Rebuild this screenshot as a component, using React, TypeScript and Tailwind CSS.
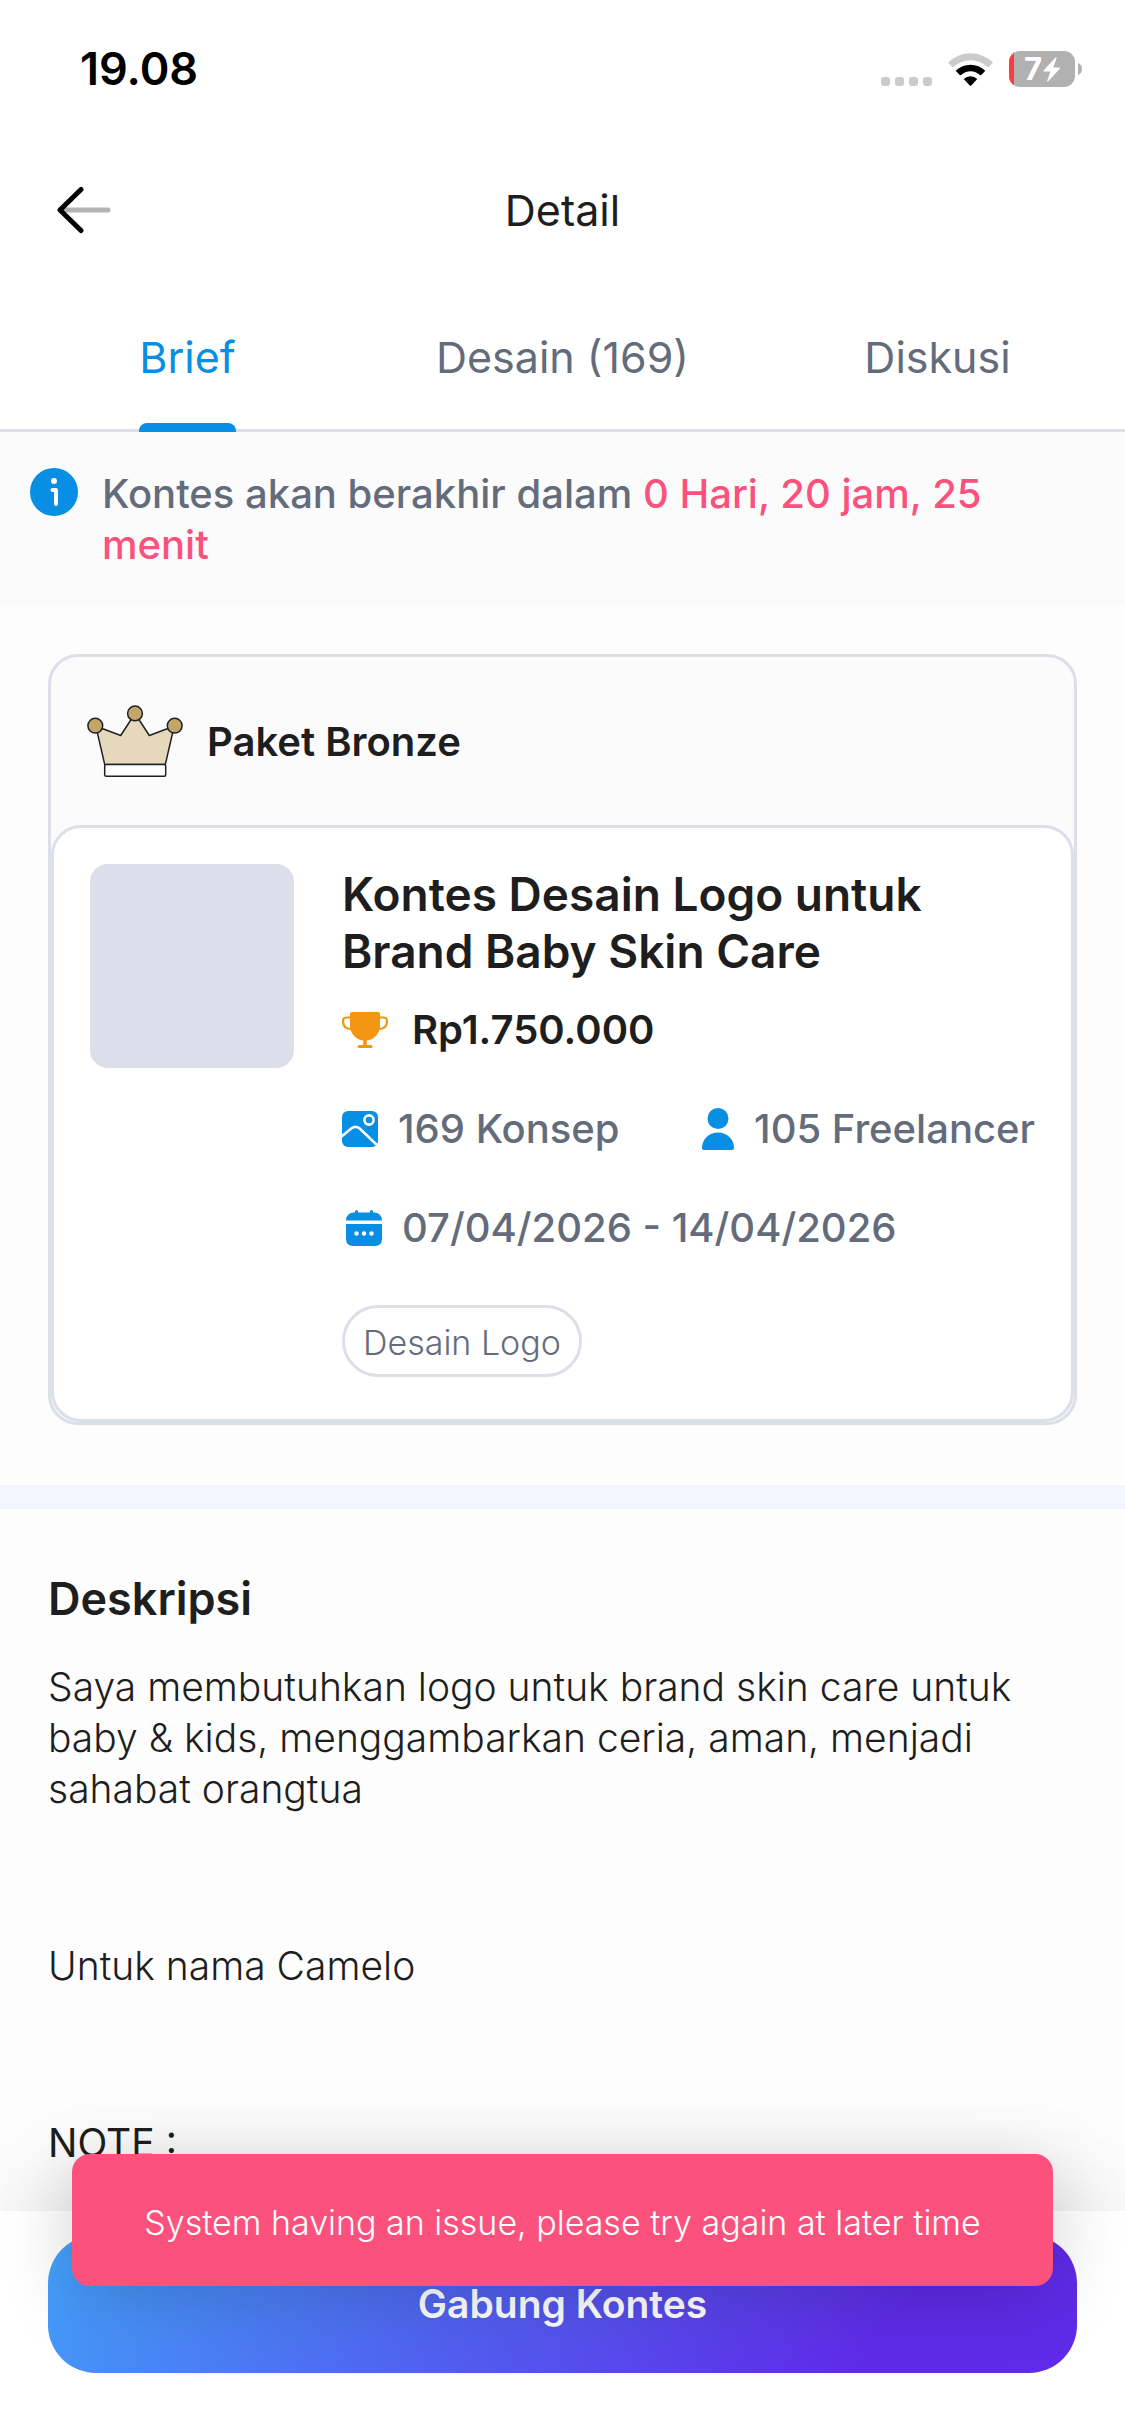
import type { ReactNode } from 'react'

function WifiIcon() {
  return (
    <svg width="45" height="33" viewBox="0 0 45 33" aria-hidden="true">
      <path d="M0 9.5a32 32 0 0 1 45 0l-4.2 4.4a1 1 0 0 1-1.4 0a24.5 24.5 0 0 0-33.8 0a1 1 0 0 1-1.4 0z" fill="#cbcbcb" />
      <path d="M7.7 17.8a21 21 0 0 1 29.6 0l-4 4.2a1 1 0 0 1-1.4 0a13.5 13.5 0 0 0-18.8 0a1 1 0 0 1-1.4 0z" fill="#000" />
      <path d="M15.7 26a10 10 0 0 1 13.6 0l-6.1 6.5a1 1 0 0 1-1.4 0z" fill="#000" />
    </svg>
  )
}

function BatteryIcon() {
  return (
    <svg className="overflow-visible" width="74" height="36" viewBox="0 0 74 36" role="img" aria-label="Baterai 7%">
      <defs>
        <clipPath id="battery-body">
          <rect width="66" height="36" rx="11" />
        </clipPath>
      </defs>
      <g clipPath="url(#battery-body)">
        <rect width="66" height="36" fill="#b1b1b1" />
        <rect width="5" height="36" fill="#ff3b3f" />
      </g>
      <path d="M69 12a6.5 6.5 0 0 1 0 12z" fill="#b1b1b1" />
      <text x="15" y="29" fill="#fff" fontFamily="Inter, sans-serif" fontWeight="700" fontSize="31">7</text>
      <path d="M46.5 6.5L34.5 19.500q-.5 1 .6 1h6.400l-3.400 9.500q0 1 1 .5L51 17.500q.5-1-.6-1H44.300l3.300-9.500q0-1-1.100-.5z" fill="#fff" />
    </svg>
  )
}

function BackIcon() {
  return (
    <svg width="54" height="48" viewBox="0 0 54 48" fill="none" strokeLinecap="round" strokeLinejoin="round" aria-hidden="true">
      <path d="M7 24H51" stroke="#b3b3b3" strokeWidth="5" />
      <path d="M24 3.500L3 24L24 44.500" stroke="#000" strokeWidth="5" />
    </svg>
  )
}

function InfoIcon() {
  return (
    <svg className="shrink-0" width="48" height="48" viewBox="0 0 48 48" aria-hidden="true">
      <circle cx="24" cy="24" r="24" fill="#088ee2" />
      <circle cx="24" cy="13" r="3" fill="#fff" />
      <path d="M22.500 22H26V36" fill="none" stroke="#fff" strokeWidth="4" strokeLinecap="round" strokeLinejoin="round" />
    </svg>
  )
}

function CrownIcon() {
  return (
    <svg width="96" height="72" viewBox="0 0 96 72" stroke="#1d2226" strokeWidth="1.500" strokeLinejoin="round" aria-hidden="true">
      <path d="M9.500 24L17.700 59.500H78.300L86.500 24L79.500 24L62.300 30.500L48 8.500L33.700 30.500L16.500 24Z" fill="#e6d8ba" />
      <rect x="17.700" y="59.500" width="61" height="11.700" rx="1.500" fill="#fff" />
      <circle cx="8.300" cy="20.700" r="7.400" fill="#c3a567" />
      <circle cx="48" cy="8.400" r="7.400" fill="#c3a567" />
      <circle cx="87.700" cy="20.700" r="7.400" fill="#c3a567" />
    </svg>
  )
}

function TrophyIcon() {
  return (
    <svg width="46" height="36" viewBox="0 0 46 36" aria-hidden="true">
      <path d="M8 2q0-2 2-2H36q2 0 2 2V14C38 21 32 28 25 28.500h-4C14 28 8 21 8 14z" fill="#f29613" />
      <path d="M9 5.500H4.500Q1 5.500 1 9C1 14 4 17 9 17M37 5.500H41.500Q45 5.500 45 9C45 14 42 17 37 17" fill="none" stroke="#f29613" strokeWidth="2.200" />
      <path d="M23 27V34" stroke="#f29613" strokeWidth="3.500" />
      <path d="M17 34.500H29" stroke="#f29613" strokeWidth="3" strokeLinecap="round" />
    </svg>
  )
}

function PictureIcon() {
  return (
    <svg width="36" height="36" viewBox="0 0 36 36" aria-hidden="true">
      <defs>
        <clipPath id="picture-frame">
          <rect width="36" height="36" rx="6" />
        </clipPath>
      </defs>
      <g clipPath="url(#picture-frame)">
        <rect width="36" height="36" fill="#088ee2" />
        <path d="M-1 26L9.500 17.300Q13.500 14.500 17.500 17.300L37 36" fill="none" stroke="#fff" strokeWidth="2.600" />
        <circle cx="27" cy="9" r="4.600" fill="#088ee2" stroke="#fff" strokeWidth="2.600" />
      </g>
    </svg>
  )
}

function PersonIcon() {
  return (
    <svg width="32" height="42" viewBox="0 0 32 42" fill="#088ee2" aria-hidden="true">
      <circle cx="16" cy="10.500" r="10.500" />
      <path d="M0 40C0 31 7 24.500 16 24.500S32 31 32 40q0 2-2 2H2q-2 0-2-2z" />
    </svg>
  )
}

function CalendarIcon() {
  return (
    <svg width="36" height="36" viewBox="0 0 36 36" fill="#088ee2" aria-hidden="true">
      <path d="M0 10.500C0 5.500 3.500 2.500 8 2.500H28C32.500 2.500 36 5.500 36 10.500z" />
      <path d="M10.500 1.500V4M25.500 1.500V4" stroke="#088ee2" strokeWidth="3" strokeLinecap="round" />
      <path d="M0 14H36V29Q36 36 29 36H7Q0 36 0 29z" />
      <g fill="#fff">
        <circle cx="10.500" cy="23.500" r="2.200" />
        <circle cx="18" cy="23.500" r="2.200" />
        <circle cx="25.500" cy="23.500" r="2.200" />
      </g>
    </svg>
  )
}

function Stat({ icon, children }: { icon: ReactNode; children: ReactNode }) {
  return (
    <div className="flex items-center gap-5 text-[40px] leading-[51px] font-medium whitespace-nowrap text-[#646c7b]">
      {icon}
      <span>{children}</span>
    </div>
  )
}

const tabs = [
  { label: 'Brief', active: true },
  { label: 'Desain (169)', active: false },
  { label: 'Diskusi', active: false },
]

export default function App() {
  return (
    <div className="flex min-h-screen flex-col bg-[#fdfdfd] font-['Inter',sans-serif] text-[#1e1e1e]">
      <div className="bg-white">
        <div className="flex h-[138px] items-center justify-between pr-[42px] pl-20">
          <span className="text-[45px] font-semibold text-black">19.08</span>
          <div className="flex items-center gap-4">
            <div className="flex h-[33px] items-end gap-[5px]">
              <span className="size-[9px] rounded-[3px] bg-[#cbcbcb]" />
              <span className="size-[9px] rounded-[3px] bg-[#cbcbcb]" />
              <span className="size-[9px] rounded-[3px] bg-[#cbcbcb]" />
              <span className="size-[9px] rounded-[3px] bg-[#cbcbcb]" />
            </div>
            <WifiIcon />
            <BatteryIcon />
          </div>
        </div>
        <header className="grid h-36 grid-cols-[1fr_auto_1fr] items-center px-[57px]">
          <button type="button" aria-label="Kembali" className="w-fit">
            <BackIcon />
          </button>
          <h1 className="text-[43px]">Detail</h1>
        </header>
        <nav className="grid h-[150px] grid-cols-3 border-b-[3px] border-[#dcdfe9]">
          {tabs.map((tab) => (
            <div key={tab.label} className="flex justify-center">
              <button
                type="button"
                aria-current={tab.active ? 'page' : undefined}
                className={
                  tab.active
                    ? 'relative flex items-center pt-1 text-[43px] text-[#088ee2] after:absolute after:inset-x-0 after:-bottom-[3px] after:h-[9px] after:rounded-t-lg after:bg-[#088ee2]'
                    : 'flex items-center pt-1 text-[43px] text-[#646c7b]'
                }
              >
                {tab.label}
              </button>
            </div>
          ))}
        </nav>
      </div>

      <div className="flex gap-6 bg-[#fbfbfc] py-9 pr-12 pl-[30px]">
        <InfoIcon />
        <p className="text-[40px] leading-[51px] font-medium text-[#646c7b]">
          Kontes akan berakhir dalam <span className="text-[#fc517d]">0 Hari, 20 jam, 25 menit</span>
        </p>
      </div>

      <section className="mx-12 mt-12 mb-15 rounded-[30px] border-[3px] border-[#dcdfe9] bg-[#fbfbfc]">
        <div className="flex items-center gap-6 px-9 py-12">
          <CrownIcon />
          <h2 className="text-[40px] leading-[51px] font-semibold">Paket Bronze</h2>
        </div>
        <div className="flex items-start gap-12 rounded-[30px] border-[3px] border-[#dcdfe9] bg-white px-9 pt-9 pb-[42px]">
          <div className="size-51 shrink-0 rounded-[18px] bg-[#dcdfe9]" />
          <div className="flex min-w-0 flex-1 flex-col items-start pt-[2px]">
            <h3 className="text-[46px] leading-[57px] font-semibold">Kontes Desain Logo untuk Brand Baby Skin Care</h3>
            <div className="mt-6 flex items-center gap-6 text-[40px] leading-[51px] font-semibold">
              <TrophyIcon />
              <span>Rp1.750.000</span>
            </div>
            <div className="mt-12 flex w-full justify-between">
              <Stat icon={<PictureIcon />}>169 Konsep</Stat>
              <Stat icon={<PersonIcon />}>105 Freelancer</Stat>
            </div>
            <div className="mt-12 pl-1">
              <Stat icon={<CalendarIcon />}>07/04/2026 - 14/04/2026</Stat>
            </div>
            <span className="mt-[52px] rounded-full border-[3px] border-[#dcdfe9] px-[18px] pt-[11px] pb-[7px] text-[34px] leading-[48px] font-light text-[#646c7b]">
              Desain Logo
            </span>
          </div>
        </div>
      </section>

      <div className="h-6 bg-[#f3f5ff]" />

      <section className="flex flex-1 flex-col px-12 pt-15">
        <h2 className="text-[45px] leading-[60px] font-semibold">Deskripsi</h2>
        <div className="mt-8 flex flex-col gap-[126px] text-[39px] leading-[51px] font-light">
          <p>Saya membutuhkan logo untuk brand skin care untuk baby &amp; kids, menggambarkan ceria, aman, menjadi sahabat orangtua</p>
          <p>Untuk nama Camelo</p>
          <p className="font-normal">NOTE :</p>
        </div>
      </section>

      <footer className="relative bg-white px-12 pt-6 pb-[63px] shadow-[0_0_120px_rgba(0,0,0,0.10)]">
        <button
          type="button"
          className="h-[138px] w-full rounded-[48px] bg-[linear-gradient(130deg,#43a4fb_0%,#5064f1_40%,#5f2be8_80%)] text-[39px] font-semibold text-white"
        >
          Gabung Kontes
        </button>
        <div
          role="alert"
          className="absolute inset-x-18 bottom-[150px] rounded-[18px] bg-[#fc517d] px-12 pt-[45px] pb-[39px] text-center text-[34px] leading-[48px] font-light text-white shadow-[0_12px_72px_rgba(0,0,0,0.18)]"
        >
          System having an issue, please try again at later time
        </div>
      </footer>
    </div>
  )
}
